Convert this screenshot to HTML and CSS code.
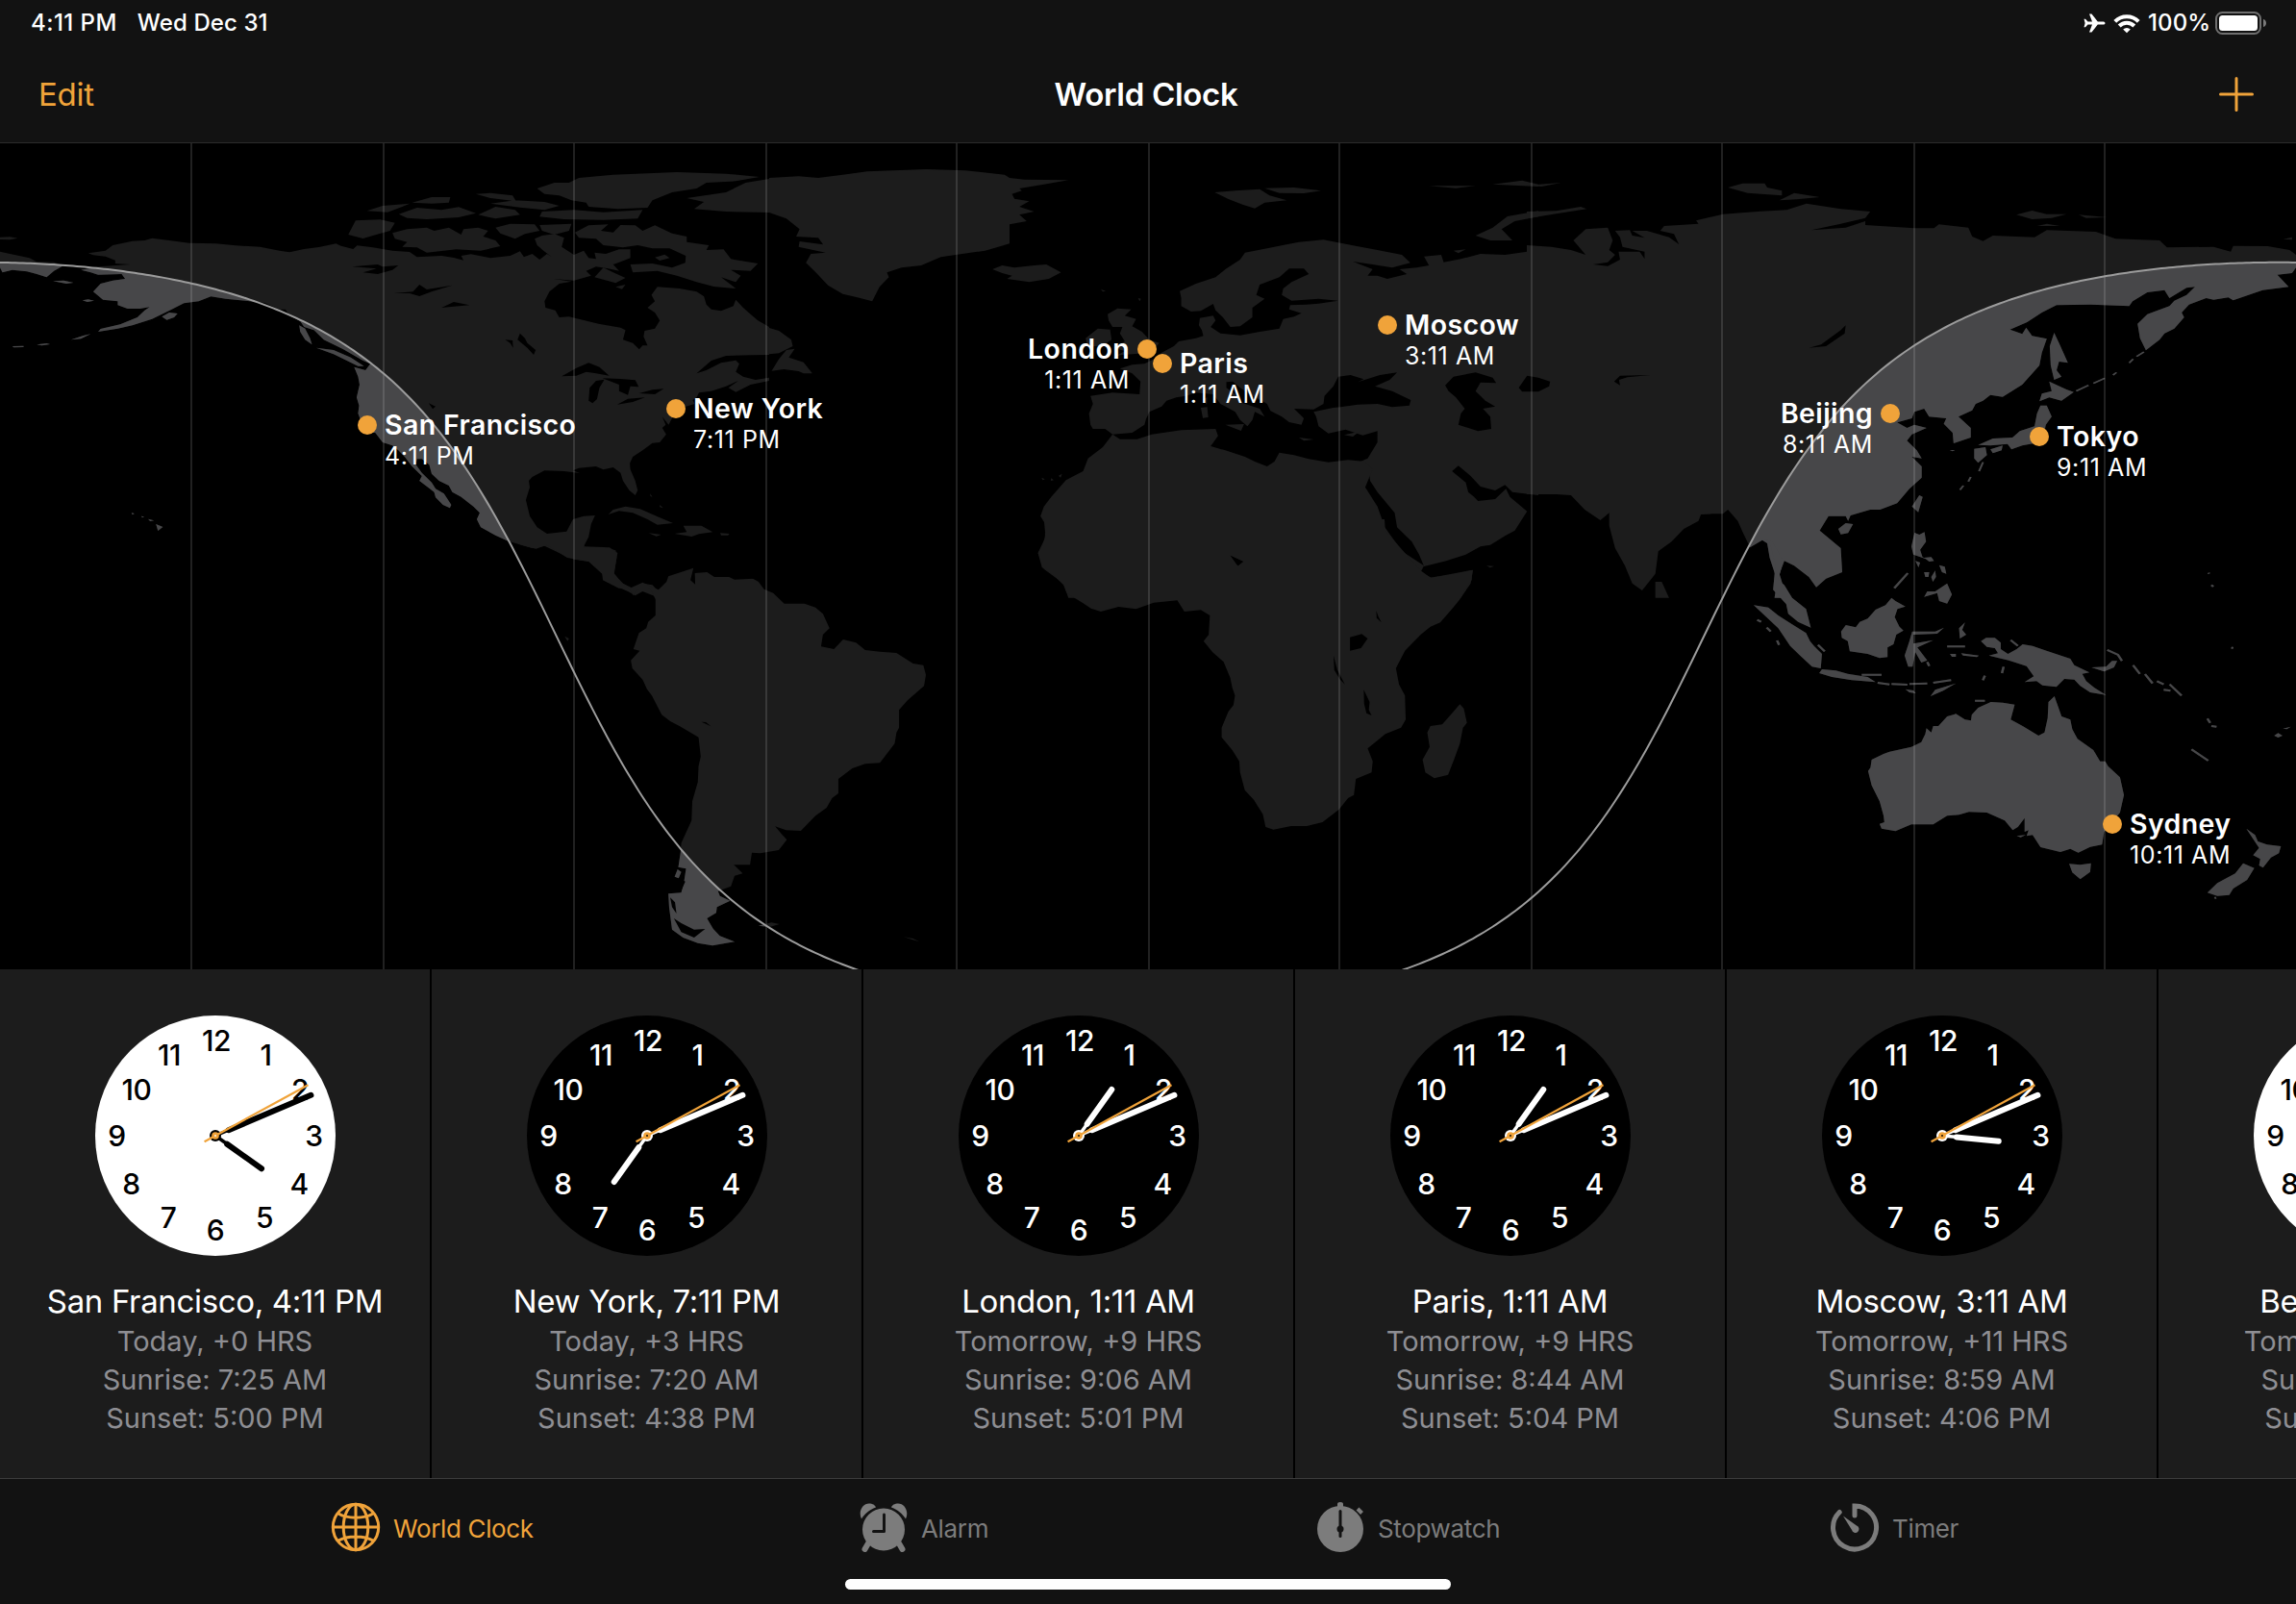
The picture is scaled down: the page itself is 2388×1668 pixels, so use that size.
FILE: index.html
```
<!DOCTYPE html>
<html lang="en">
<head>
<meta charset="utf-8">
<title>World Clock</title>
<link rel="stylesheet" href="styles.css">
</head>
<body>
<div class="screen">
  <header class="top">
    <div class="status">
      <div class="status-left"><span class="st-time">4:11 PM</span><span class="st-date">Wed Dec 31</span></div>
      <div class="status-right">
        <svg class="plane" width="23" height="20" viewBox="0 0 23 20"><path d="M22.500 10c0 1-1 1.600-2.500 1.600h-5.200L8.500 19.500H6l3-7.900H4.500L2 14.300H.5L1.600 10 .5 5.700H2l2.500 2.700H9L6 .5h2.500l6.300 7.900H20c1.500 0 2.500.6 2.500 1.600z"/></svg>
        <svg class="wifi" width="28" height="21" viewBox="0 0 28 21"><path class="arc" d="M1.800 8.300a17.300 17.300 0 0 1 24.400 0M6.200 13a11 11 0 0 1 15.600 0"/><path d="M14 20.300l-3.800-3.900a5.500 5.500 0 0 1 7.600 0z"/></svg>
        <span class="st-pct">100%</span>
        <svg class="batt" width="54" height="24" viewBox="0 0 54 24"><rect class="shell" x="1" y="1" width="46" height="22" rx="6.500"/><rect x="4" y="4" width="40" height="16" rx="3.500"/><path class="nub" d="M50 8c4 1 4 7 0 8z"/></svg>
      </div>
    </div>
    <div class="nav">
      <span class="edit">Edit</span>
      <h1 class="title">World Clock</h1>
      <svg class="plus" width="36" height="36" viewBox="0 0 36 36"><path d="M18 1.500v33M1.500 18h33"/></svg>
    </div>
  </header>

  <main class="map">
    <svg class="world" width="2388" height="860" viewBox="0 148 2388 860">
      <defs>
        <clipPath id="day"><path id="dayArea"/></clipPath>
        <g id="land">
          <!-- North America -->
          <g transform="translate(0 140) scale(.5102 .33333)">
            <path d="M0 365L30 375 60 385 75 397 110 398 130 408 110 425 95 445 75 435 55 427 25 422 5 430 0 415zM0 320L20 319 36 323 20 328 0 327zM108 457L130 455 150 462 135 465zM168 517L180 514 192 518 178 522z"/>
            <path d="M180 370L215 362 230 345 270 332 295 330 310 323 345 330 385 338 440 340 480 346 530 350 570 362 590 367 620 357 650 351 685 340 695 347 720 357 728 346 760 352 800 362 835 366 850 382 900 378 925 384 945 392 940 378 960 373 1000 385 1040 378 1060 364 1068 382 1085 372 1100 390 1115 372 1125 382 1108 362 1095 345 1090 325 1105 315 1130 310 1150 322 1145 350 1170 375 1190 362 1200 385 1215 388 1212 368 1235 372 1262 358 1285 358 1285 385 1260 400 1250 405 1262 425 1240 418 1215 412 1195 425 1205 440 1170 455 1128 450 1165 458 1140 465 1120 490 1110 520 1112 540 1132 548 1140 570 1160 568 1180 575 1220 590 1265 602 1275 610 1270 640 1290 650 1303 670 1310 658 1320 658 1312 630 1314 612 1335 605 1345 580 1335 555 1320 540 1335 520 1328 500 1340 475 1385 480 1420 490 1435 505 1440 530 1450 545 1470 550 1495 535 1500 515 1515 540 1530 560 1545 580 1568 600 1568 687 1530 688 1480 690 1450 705 1420 745 1440 735 1470 712 1500 704 1507 715 1500 740 1515 755 1540 765 1568 758 1568 768 1530 780 1500 803 1485 790 1505 768 1480 785 1450 800 1425 805 1420 820 1412 828 1416 840 1395 850 1375 868 1370 885 1363 905 1350 880 1357 905 1350 915 1358 935 1345 960 1330 962 1310 985 1290 1005 1284 1025 1285 1045 1295 1080 1300 1110 1295 1125 1283 1110 1270 1080 1265 1055 1250 1038 1230 1045 1215 1035 1180 1040 1168 1048 1182 1056 1150 1050 1110 1048 1085 1068 1078 1080 1080 1100 1072 1140 1080 1190 1095 1225 1115 1245 1155 1238 1168 1200 1190 1190 1213 1188 1205 1215 1200 1255 1190 1285 1230 1287 1255 1297 1257 1320 1252 1370 1270 1400 1290 1415 1310 1400 1330 1405 1345 1430 1335 1440 1310 1425 1295 1438 1280 1425 1250 1405 1230 1390 1228 1370 1200 1332 1170 1325 1140 1305 1110 1283 1085 1290 1036 1268 1010 1250 980 1225 972 1200 978 1180 965 1160 940 1130 922 1115 915 1095 895 1080 880 1058 875 1030 860 1012 850 1012 848 1030 860 1055 880 1085 888 1105 905 1120 920 1155 917 1165 903 1155 888 1132 885 1115 855 1080 860 1065 840 1035 825 1005 812 985 800 970 780 960 765 930 750 930 735 890 730 870 732 845 727 820 733 780 730 755 722 725 745 735 755 715 740 705 700 670 660 640 640 610 620 600 612 582 590 565 582 545 570 545 540 525 500 518 460 512 430 505 405 520 375 526 350 545 310 575 270 595 240 605 200 615 205 606 245 592 280 570 295 548 305 538 285 543 260 543 240 532 240 520 210 515 190 490 205 465 230 455 255 450 248 435 200 437 185 430 165 422 200 412 265 405 235 402 235 392 215 380 190 376z"/>
            <path d="M645 665L680 672 715 695 742 722 730 722 700 700 680 685zM610 595L622 605 632 635 636 655 622 640 612 615zM330 568L345 555 362 558 355 570 340 578zM145 640L170 627 185 622 165 637zM75 655L95 651 102 654 85 658zM25 660L48 659 48 663 28 664zM318 1215L332 1224 322 1236zM302 1199L314 1204 306 1206zM288 1190L294 1192 290 1195zM268 1180L274 1182 270 1186z"/>
            <path d="M725 268L775 265 805 275 795 300 760 315 740 324 710 312zM800 307L830 295 870 290 885 300 915 290 940 312 945 295 975 290 995 300 985 318 1010 330 1020 348 980 362 930 358 870 368 850 352 820 350 830 335 805 325zM748 238L780 222 835 215 820 225 790 242zM813 248L850 228 900 235 935 226 970 245 935 258 870 264 830 260zM840 212L880 195 918 195 915 212 880 215zM970 185L1000 182 1045 190 1052 208 1000 198zM1000 215L1050 205 1110 210 1140 222 1110 235 1060 227zM975 250L1010 225 1050 235 1060 250 1010 262zM1105 240L1170 235 1230 242 1310 235 1300 262 1230 266 1150 264 1100 256zM1095 168L1130 150 1160 150 1180 135 1250 125 1380 117 1480 122 1548 132 1500 145 1440 150 1420 168 1370 180 1330 205 1320 228 1260 232 1200 225 1195 212 1165 205 1140 190 1110 185zM1010 290L1040 278 1090 280 1100 300 1070 310 1050 325 1020 308zM1100 282L1165 278 1160 300 1130 312 1105 300z"/>
            <path d="M1172 305L1200 283 1240 280 1225 300 1250 305 1265 282 1295 283 1310 300 1335 283 1370 308 1400 318 1400 335 1445 345 1440 360 1475 358 1490 388 1545 402 1530 425 1490 422 1510 440 1500 460 1470 445 1500 480 1455 474 1420 460 1380 440 1340 425 1290 430 1285 405 1330 402 1370 415 1397 400 1398 378 1365 355 1330 355 1300 345 1270 352 1230 345 1215 325 1180 322zM1335 383L1355 374 1365 385 1345 393zM1212 445L1230 415 1250 430 1275 447 1255 463 1230 452zM1255 475L1275 468 1268 482zM1240 1185L1250 1170 1275 1160 1305 1168 1345 1195 1372 1212 1340 1217 1320 1200 1290 1180 1262 1174zM1375 1245L1400 1240 1393 1220 1430 1220 1453 1240 1425 1246 1410 1254zM1322 1243L1348 1248 1338 1253zM1468 1243L1487 1245 1484 1250 1470 1250zM1325 1120L1330 1130 1326 1128zM1345 1155L1352 1165 1345 1162z"/>
            <path d="M1568 138L1520 150 1480 180 1400 198 1435 210 1415 232 1480 240 1568 243z"/>
          </g>
          <!-- Greenland, Europe, northern Africa, Middle East -->
          <g transform="translate(800 140) scale(.5102 .33333)">
            <path d="M0 135L60 130 100 135 150 125 200 115 320 108 400 112 480 125 490 135 520 140 610 142 560 155 510 168 515 175 495 185 500 200 530 208 510 225 540 240 510 250 525 270 490 280 490 340 440 362 350 382 310 408 270 415 240 430 244 445 225 475 210 520 180 508 150 497 120 470 95 430 75 400 85 372 115 368 60 350 62 333 110 343 100 322 55 318 62 295 35 262 0 243z"/>
            <path d="M0 603L20 612 45 640 48 660 20 682 0 685zM5 737L20 700 35 672 52 668 40 695 70 710 88 745 70 745 60 738 30 732zM455 420L475 408 500 415 540 408 565 405 595 430 570 450 530 460 485 450 495 440 475 432zM908 180L950 175 1000 170 1020 190 1055 205 1010 212 990 230 965 218 935 200zM1010 167L1070 165 1125 175 1090 183 1040 182zM690 560L710 542 738 545 725 565 748 575 740 598 760 615 775 640 795 650 785 668 765 682 715 688 700 697 725 675 703 665 725 645 715 620 720 600 700 600 692 580zM650 662L645 635 670 605 695 608 698 640 680 658z"/>
            <path d="M655 905L652 870 660 840 655 815 700 805 755 810 757 770 740 745 715 730 740 718 765 715 785 700 800 680 825 660 835 645 870 635 885 628 882 610 876 595 878 572 905 565 910 580 900 600 920 620 960 626 1000 615 1040 605 1048 575 1070 568 1085 557 1060 545 1062 532 1095 530 1120 527 1160 518 1120 512 1065 518 1045 500 1048 480 1065 460 1100 435 1090 418 1060 418 1040 445 1000 468 993 500 1010 512 985 540 985 570 960 598 940 600 925 570 910 548 905 528 880 550 860 552 840 535 840 510 837 488 870 465 910 445 930 420 960 390 970 368 990 362 1030 350 1080 335 1130 328 1170 340 1240 360 1290 375 1307 400 1270 415 1230 405 1190 396 1230 420 1220 440 1240 440 1260 450 1300 435 1285 420 1320 415 1345 408 1335 380 1370 375 1375 398 1410 388 1450 372 1500 375 1555 363 1568 370 1568 1125 1515 1115 1500 1093 1480 1110 1450 1098 1430 1065 1405 1033 1392 1050 1420 1085 1425 1115 1437 1130 1445 1143 1480 1137 1502 1105 1510 1130 1545 1175 1520 1235 1500 1252 1470 1280 1450 1285 1420 1310 1380 1330 1335 1347 1325 1310 1310 1270 1280 1225 1275 1180 1240 1115 1225 1080 1223 1053 1217 1082 1190 1043 1205 1020 1220 1010 1240 960 1240 925 1210 938 1175 920 1140 932 1120 910 1115 880 1110 865 1150 852 1165 850 1200 842 1240 840 1270 850 1305 845 1308 828 1270 800 1235 785 1265 765 1280 742 1245 750 1200 772 1212 763 1185 750 1160 755 1150 785 1132 815 1130 840 1110 857 1070 855 1090 885 1085 905 1060 897 1045 880 1022 862 1015 840 980 810 960 790 945 770 932 772 932 790 950 810 960 835 1000 855 1010 880 990 865 985 890 975 910 960 890 950 865 920 840 905 810 870 805 850 815 830 820 810 830 800 848 775 865 768 888 765 905 740 930 700 935 685 918 660 918z"/>
            <path d="M930 905L968 903 962 924zM880 852L893 850 895 882 884 884zM884 825L893 820 892 842zM1080 945L1110 951 1090 955zM1172 937L1203 926 1190 942zM1440 315L1475 290 1505 255 1568 238 1568 256 1520 270 1493 295 1515 330 1470 330zM1345 160L1440 160 1400 167zM1475 155L1535 143 1568 155 1568 162zM1395 362L1420 358 1405 370zM555 1070L562 1075 558 1078zM575 1072L580 1078 574 1080zM590 1064L597 1058 594 1070zM676 482L686 488 680 490zM752 510L758 512 755 520z"/>
            <path d="M700 935L715 950 750 950 780 935 840 922 910 918 915 940 900 972 930 985 970 1005 990 1020 1015 1035 1030 1020 1040 992 1070 1000 1100 1012 1140 1022 1180 1015 1215 1020 1230 1045 1215 1100 1240 1160 1255 1225 1290 1300 1320 1330 1335 1345 1328 1365 1350 1382 1400 1370 1435 1358 1430 1400 1410 1445 610 1445 600 1400 560 1355 548 1305 562 1260 563 1215 553 1190 560 1160 575 1130 605 1078 640 1050 650 1010 680 975z"/>
          </g>
          <!-- Asia -->
          <g transform="translate(1588 140) scale(.5102 .33333)">
            <path d="M0 345L50 350 90 360 120 375 95 330 120 295 165 290 175 330 168 360 180 375 165 398 135 405 165 410 190 390 187 365 230 365 240 387 240 365 195 350 190 320 180 300 210 298 215 315 240 322 215 300 245 300 290 320 310 342 300 310 272 300 280 285 350 278 345 268 400 248 470 240 530 235 570 215 640 232 700 240 690 260 640 278 580 298 650 290 690 270 690 282 720 285 790 292 830 292 840 280 900 290 908 318 930 332 950 315 1035 320 1060 298 1160 303 1200 325 1290 330 1305 352 1400 350 1435 365 1440 347 1510 348 1555 360 1568 375 1568 415 1560 432 1530 437 1553 475 1500 485 1440 517 1430 508 1400 515 1385 510 1350 530 1335 555 1340 570 1320 605 1300 620 1290 640 1262 673 1250 635 1245 590 1265 560 1310 535 1320 518 1345 500 1362 475 1345 478 1310 510 1300 485 1265 492 1235 520 1228 535 1150 530 1080 532 1050 555 1020 585 985 608 1010 622 1018 602 1030 628 1060 637 1050 680 1045 720 1010 780 970 818 945 812 930 830 915 840 908 860 880 880 905 915 905 945 870 963 868 930 850 902 855 885 820 880 810 855 790 865 785 885 755 898 775 915 790 905 815 915 785 935 775 955 795 985 805 1010 785 1005 805 1035 805 1070 780 1105 755 1150 720 1170 700 1170 660 1188 655 1205 650 1190 615 1190 597 1235 640 1290 643 1365 610 1385 590 1412 575 1380 545 1345 525 1330 515 1370 530 1445 505 1445 510 1390 495 1320 490 1275 480 1265 455 1288 440 1240 430 1205 410 1170 400 1183 380 1183 355 1185 350 1205 320 1230 295 1270 268 1300 262 1370 235 1422 215 1400 200 1345 180 1290 168 1220 168 1180 150 1203 118 1170 90 1125 60 1122 0 1122z"/>
            <path d="M262 1395L275 1395 290 1445 262 1445zM1075 618L1085 650 1103 712 1085 708 1080 735 1090 755 1075 765 1068 720 1066 660zM1045 832L1050 808 1070 800 1065 770 1100 795 1115 803 1090 830 1065 820zM1047 845L1060 845 1070 880 1058 905 1052 950 1045 960 1010 970 988 982 980 965 945 970 920 968 950 948 990 945 1005 925 1035 910 1040 870zM912 980L935 975 938 1000 920 1024 912 1010zM945 982L970 970 968 985 950 994zM785 1160L800 1125 807 1130 798 1178zM635 1230L650 1212 665 1215 655 1243 640 1247zM410 165L440 152 485 152 490 165 520 175 520 190 450 182zM515 205L545 182 597 195 550 202zM998 250L1030 237 1060 248 1100 248 1070 260 1030 264zM1125 250L1183 258 1140 260zM1040 285L1060 278 1087 285zM0 240L60 238 110 225 122 232 60 247 0 262zM0 158L70 150 30 162zM1542 326L1560 320 1560 328zM862 984L873 984 868 988z"/>
            <path class="chain" d="M1120 800L1145 782M1155 776L1178 760M1195 750L1202 742M1228 712L1236 700M1243 692L1258 678M930 1022L922 1050M905 1068L900 1082M890 1095L883 1108"/>
          </g>
          <!-- South America -->
          <g transform="translate(500 560) scale(.38265 .33333)">
            <path d="M70 0L110 20 150 32 180 20 200 35 235 60 295 72 330 110 332 130 375 155 402 155 415 178 425 160 460 155 475 190 475 240 455 260 450 280 430 295 415 345 432 350 408 380 412 405 440 440 452 470 465 490 492 550 515 570 540 585 592 620 598 680 592 710 590 760 575 820 573 880 545 950 543 980 537 1025 558 1030 552 1075 545 1105 510 1108 512 1150 520 1220 550 1245 590 1262 630 1270 690 1258 650 1240 632 1218 615 1185 640 1168 642 1150 678 1130 650 1115 645 1100 680 1085 690 1052 712 1045 688 1018 715 1018 732 1018 737 980 760 982 810 972 832 940 820 925 800 898 830 910 870 912 910 865 940 840 955 810 972 795 972 750 1010 717 1045 703 1085 700 1125 640 1130 605 1137 590 1137 535 1160 505 1205 460 1210 425 1203 395 1175 390 1130 357 1085 353 1045 348 1020 325 985 315 960 345 925 337 930 300 948 280 930 235 910 215 880 203 825 203 795 170 770 158 755 135 740 125 690 128 675 120 635 120 615 105 582 108 583 143 570 130 578 92 510 118 505 135 483 160 440 137 405 155 380 135 362 108 372 45 350 28 280 28 285 0zM755 1208L790 1198 812 1203 785 1212zM1150 1243L1175 1248 1192 1258 1170 1250zM527 1055L535 1032 545 1040 538 1060zM228 305L240 312 236 320z"/>
          </g>
          <!-- Southern Africa and Madagascar -->
          <g transform="translate(1000 540) scale(.40816 .33333)">
            <path d="M210 0L214 50 207 80 195 105 205 150 235 175 260 205 268 230 310 262 330 278 355 288 400 273 445 280 490 260 550 253 568 288 610 283 633 300 630 360 617 380 640 415 668 445 685 495 690 525 697 550 693 580 680 600 663 650 663 680 690 720 708 755 710 790 722 845 745 875 768 920 775 960 795 968 840 957 880 957 920 945 962 905 985 870 1000 860 1005 810 1045 790 1048 755 1035 715 1060 690 1080 670 1120 650 1132 625 1130 550 1115 515 1107 465 1130 410 1170 360 1195 335 1220 322 1250 280 1270 250 1285 215 1300 190 1302 158 1230 175 1195 182 1170 160 1130 105 1080 35 1078 0zM1270 577L1280 590 1288 635 1278 650 1270 700 1255 750 1240 797 1205 808 1182 790 1175 750 1193 710 1187 665 1195 645 1225 640 1250 605zM1338 145L1357 146 1347 151z"/>
          </g>
          <!-- Southeast Asia, Australia, New Zealand -->
          <g transform="translate(1740 500) scale(.41327 .33333)">
            <path d="M225 180L243 190 258 260 252 340 285 385 290 415 315 440 347 458 335 400 300 365 280 325 265 310 277 250 250 190zM203 388L240 395 265 420 300 448 335 475 345 500 355 515 375 540 372 585 350 580 320 545 295 515 265 460zM368 600L375 588 410 592 440 602 490 612 510 628 450 622 400 612zM648 672L660 652 712 632 680 655zM585 650L605 654 611 663 595 660zM423 470L435 450 460 457 470 440 490 430 510 402 535 388 550 365 560 375 585 392 565 400 558 425 570 455 580 467 562 480 555 510 540 520 540 550 520 553 490 540 445 532 440 500 425 490zM583 545L595 500 602 470 660 470 682 458 665 477 605 480 605 508 655 497 615 520 640 560 625 567 610 535 603 580 592 580zM722 492L720 460 735 442 728 465 738 480zM725 538L770 545 765 550 730 545zM697 540L712 540 712 549 702 549zM775 500L788 490 810 490 825 505 825 525 843 540 865 525 880 510 905 515 940 530 1000 555 1010 575 1048 598 1030 602 1040 625 1060 645 1090 668 1050 660 1025 640 1010 620 985 618 965 643 930 638 915 625 885 628 908 610 890 578 845 560 820 553 795 545 818 538 810 522 790 518zM1053 582L1090 580 1105 562 1118 562 1110 582 1085 595zM608 162L620 168 633 160 637 190 622 215 628 238 640 245 605 230 600 205zM632 362L640 345 660 345 690 320 702 355 690 383 670 375 665 350zM632 240L650 238 657 250 645 252zM670 263L684 268 688 290 677 285zM632 285L645 285 643 300 635 300zM610 250L622 255 618 270zM660 280L662 300 654 315 650 300z"/>
            <path d="M500 870L530 852 545 845 600 830 625 815 635 790 638 772 650 785 655 765 668 765 690 735 712 727 735 745 750 748 752 730 768 708 800 690 830 692 860 698 850 745 880 765 920 795 935 785 943 740 945 690 960 672 968 700 978 735 1000 745 1005 775 1018 805 1058 840 1075 875 1088 875 1095 890 1125 925 1135 980 1125 1035 1105 1065 1085 1095 1080 1135 1050 1142 1020 1160 1000 1148 975 1158 925 1143 905 1105 890 1108 895 1090 885 1095 885 1052 868 1080 855 1090 835 1060 790 1035 745 1033 720 1042 690 1045 655 1072 600 1072 560 1093 525 1085 520 1070 532 1065 530 1045 520 1000 500 950 491 905 497 895zM865 1108L888 1105 875 1112zM997 1195L1025 1198 1052 1193 1050 1220 1025 1243 1005 1222zM1443 1085L1465 1105 1472 1125 1495 1135 1530 1140 1525 1162 1505 1175 1485 1207 1475 1200 1478 1180 1460 1168 1475 1145zM1435 1193L1463 1208 1445 1245 1410 1272 1400 1292 1370 1295 1345 1285 1370 1255 1415 1225zM1513 795L1523 787 1534 795 1523 801zM1535 773L1555 767 1545 775z"/>
            <path class="chain thick" d="M515 630L545 635M550 634L590 636M595 634L640 632M655 630L700 622M557 335L575 310 591 288M212 434L222 440M236 458L246 470M262 498L267 512M365 512L382 532M640 565L645 578M832 580L828 600M785 608L780 622M1093 528L1120 543 1130 562M1158 575L1175 602M1188 603L1207 632M1218 625L1235 635M1235 652L1252 655M1250 635L1280 670M1305 838L1347 873M1345 742L1352 755M1355 765L1368 767M760 686L785 686M1348 287L1349 290M1355 325L1360 330M1363 1302L1367 1300M1405 520L1410 522M850 497L868 515M690 517L735 517M475 605L525 605"/>
          </g>
        </g>
        <g id="lakes">
          <path transform="translate(0 140) scale(.5102 .33333)" d="M718 412L770 405 780 412 812 408 800 422 770 435 740 430 768 418zM803 495L842 490 855 468 870 483 922 470 880 490 855 504 835 495zM900 540L925 522 957 532 925 536zM1060 620L1070 635 1075 650 1092 672 1088 687 1075 665 1055 640zM1030 640L1045 642 1046 665 1040 650zM1145 754L1175 728 1200 712 1222 725 1242 752 1215 745 1195 740 1175 752zM1200 830L1202 790 1215 768 1232 764 1222 790 1217 825 1208 838zM1228 760L1265 762 1295 766 1302 787 1285 785 1280 812 1262 800 1262 780zM1258 842L1280 824 1315 820 1290 834zM1303 807L1330 796 1353 793 1335 810zM874 838L888 848 882 856z"/>
          <path transform="translate(800 140) scale(.5102 .33333)" d="M1378 782L1395 755 1440 742 1475 758 1482 775 1450 773 1440 800 1460 830 1480 848 1455 855 1470 880 1472 918 1445 925 1405 905 1410 870 1418 855 1400 820 1385 800zM1528 790L1545 752 1568 758 1592 770 1590 785 1568 802 1535 802zM940 1313L966 1332 955 1345z"/>
          <path transform="translate(1588 140) scale(.5102 .33333)" d="M575 665L600 655 640 610 650 595 648 620 610 660zM178 770L190 752 252 750 205 757 188 765 190 782z"/>
          <path transform="translate(1000 540) scale(.40816 .33333)" d="M990 368L1020 358 1035 372 1018 402 990 410zM948 425L958 470 977 515 965 500 950 470zM1025 532L1040 570 1038 595 1045 612 1032 605 1026 575zM1057 286L1063 305 1070 322 1058 308zM687 115L718 132 705 145z"/>
          <path transform="translate(500 560) scale(.38265 .33333)" d="M600 572L612 573 626 586zM700 116L755 120 750 127zM540 1060L556 1070 545 1098zM515 1120L528 1135 532 1170 520 1150zM525 1185L545 1200 580 1220 610 1218 580 1245 545 1228z"/>
        </g>
      </defs>
      <use class="night" href="#land"/>
      <use class="daylight" href="#land" clip-path="url(#day)"/>
      <use href="#lakes"/>
      <path class="meridians" d="M199 148v860M399 148v860M597 148v860M797 148v860M995 148v860M1195 148v860M1393 148v860M1593 148v860M1791 148v860M1991 148v860M2189 148v860"/>
      <path class="terminator" id="terminator"/>
    </svg>

    <div class="pin sf"><i></i><p><b>San Francisco</b><span>4:11 PM</span></p></div>
    <div class="pin ny"><i></i><p><b>New York</b><span>7:11 PM</span></p></div>
    <div class="pin left london"><i></i><p><b>London</b><span>1:11 AM</span></p></div>
    <div class="pin paris"><i></i><p><b>Paris</b><span>1:11 AM</span></p></div>
    <div class="pin moscow"><i></i><p><b>Moscow</b><span>3:11 AM</span></p></div>
    <div class="pin left beijing"><i></i><p><b>Beijing</b><span>8:11 AM</span></p></div>
    <div class="pin tokyo"><i></i><p><b>Tokyo</b><span>9:11 AM</span></p></div>
    <div class="pin sydney"><i></i><p><b>Sydney</b><span>10:11 AM</span></p></div>
  </main>

  <section class="clocks">
    <article class="card"><svg class="dial light" data-hour="4"></svg><h2>San Francisco, 4:11 PM</h2><p>Today, +0 HRS</p><p>Sunrise: 7:25 AM</p><p>Sunset: 5:00 PM</p></article>
    <article class="card"><svg class="dial" data-hour="7"></svg><h2>New York, 7:11 PM</h2><p>Today, +3 HRS</p><p>Sunrise: 7:20 AM</p><p>Sunset: 4:38 PM</p></article>
    <article class="card"><svg class="dial" data-hour="1"></svg><h2>London, 1:11 AM</h2><p>Tomorrow, +9 HRS</p><p>Sunrise: 9:06 AM</p><p>Sunset: 5:01 PM</p></article>
    <article class="card"><svg class="dial" data-hour="1"></svg><h2>Paris, 1:11 AM</h2><p>Tomorrow, +9 HRS</p><p>Sunrise: 8:44 AM</p><p>Sunset: 5:04 PM</p></article>
    <article class="card"><svg class="dial" data-hour="3"></svg><h2>Moscow, 3:11 AM</h2><p>Tomorrow, +11 HRS</p><p>Sunrise: 8:59 AM</p><p>Sunset: 4:06 PM</p></article>
    <article class="card"><svg class="dial light" data-hour="8"></svg><h2>Beijing, 8:11 AM</h2><p>Tomorrow, +16 HRS</p><p>Sunrise: 7:36 AM</p><p>Sunset: 4:58 PM</p></article>
  </section>

  <footer class="bottom">
    <nav class="tabs">
      <a class="tab active world-tab">
        <svg width="52" height="52" viewBox="0 0 52 52"><g class="line"><circle cx="26" cy="26" r="23.700"/><ellipse cx="26" cy="26" rx="12.800" ry="23.700"/><path d="M26 2v48M2 26h48M8 12c9 5.500 27 5.500 36 0M8 40c9-5.500 27-5.500 36 0"/></g></svg>
        <span>World Clock</span>
      </a>
      <a class="tab alarm-tab">
        <svg width="52" height="52" viewBox="0 0 52 52"><circle cx="26" cy="28.500" r="22"/><path d="M3 17.500C-1 9 5 .5 12 1.500c4 .5 5.500 2.500 6 4C11 8 6.500 12 3 17.500zM49 17.500C53 9 47 .5 40 1.500c-4 .5-5.500 2.500-6 4C41 8 45.500 12 49 17.500z"/><path class="legs" d="M10 43l-3.500 6M42 43l3.500 6"/><path class="cut" d="M26.500 13v17.500H15.500"/></svg>
        <span>Alarm</span>
      </a>
      <a class="tab stop-tab">
        <svg width="52" height="52" viewBox="0 0 52 52"><circle cx="26" cy="28" r="24"/><path d="M23 5V2q0-2 3-2t3 2v3z"/><path class="button" d="M44 7l4.500 4.500"/><path class="cut thin" d="M26 9.500v26"/><circle class="cutfill" cx="26" cy="28" r="3.500"/></svg>
        <span>Stopwatch</span>
      </a>
      <a class="tab timer-tab">
        <svg width="52" height="52" viewBox="0 0 52 52"><path class="ring" d="M26 14V4A22.500 22.500 0 1 1 10.200 10.500"/><path d="M14 14.500L28 24.500a3.800 3.800 0 1 1-5 4.500z"/></svg>
        <span>Timer</span>
      </a>
    </nav>
    <div class="home"></div>
  </footer>
</div>
<script src="script.js"></script>
</body>
</html>
```
FILE: styles.css
```
* { box-sizing: border-box; margin: 0; padding: 0; }
body { background: #000; color: #fff; font-family: Inter, "Liberation Sans", sans-serif; overflow: hidden; }
.screen { width: 2388px; height: 1668px; display: flex; flex-direction: column; overflow: hidden; }

.top { height: 149px; background: #121212; border-bottom: 1px solid #2b2b2b; flex: none; }
.status { height: 48px; display: flex; justify-content: space-between; padding: 0 30px 0 32px; font-size: 24px; font-weight: 500; line-height: 48px; }
.status-left { display: flex; gap: 21px; }
.st-time { letter-spacing: .45px; }
.st-date { letter-spacing: .1px; }
.status-right { display: flex; align-items: center; }
.status-right svg { fill: #fff; flex: none; }
.wifi { margin: 0 8px; }
.wifi .arc { fill: none; stroke: #fff; stroke-width: 4; }
.st-pct { width: 64px; margin-right: 6px; white-space: nowrap; letter-spacing: .1px; }
.batt .shell { fill: none; stroke: #6f6f6f; stroke-width: 2; }
.batt .nub { fill: #7a7a7a; }
.nav { height: 100px; display: grid; grid-template-columns: 1fr auto 1fr; align-items: center; padding: 0 44px 0 40px; }
.edit { color: #f0a33a; font-size: 33px; letter-spacing: -.3px; }
.title { font-size: 33px; font-weight: 600; letter-spacing: -.3px; }
.plus { justify-self: end; fill: none; stroke: #f0a33a; stroke-width: 3; stroke-linecap: round; }

.map { position: relative; height: 859px; flex: none; background: #000; overflow: hidden; }
.world { display: block; margin-top: -1px; }
.night { fill: #1c1c1c; stroke: #1c1c1c; }
.daylight { fill: #474749; stroke: #474749; }
#land path { stroke: none; }
#land .chain { fill: none; stroke: inherit; stroke-width: 4; }
#land .thick { stroke-width: 6; }
#lakes { fill: #000; }
.meridians { fill: none; stroke: #fff; stroke-opacity: .13; stroke-width: 2; }
.terminator { fill: none; stroke: #9c9c9c; stroke-width: 2; }

.pin { position: absolute; display: flex; gap: 8px; align-items: flex-start; white-space: nowrap; }
.pin i { width: 20px; height: 20px; border-radius: 50%; background: #f0a33a; flex: none; }
.pin p { margin-top: -8px; }
.pin b { display: block; font-size: 28.500px; font-weight: 600; line-height: 36px; letter-spacing: .4px; }
.pin span { display: block; font-size: 25px; line-height: 28px; letter-spacing: .6px; }
.pin.left { flex-direction: row-reverse; text-align: right; }
.sf { left: 372px; top: 283px; }
.ny { left: 693px; top: 266px; }
.london { right: 1185px; top: 204px; }
.paris { left: 1199px; top: 219px; }
.moscow { left: 1433px; top: 179px; }
.beijing { right: 412px; top: 271px; }
.tokyo { left: 2111px; top: 295px; }
.sydney { left: 2187px; top: 698px; }

.clocks { height: 529px; flex: none; display: flex; gap: 2px; overflow: hidden; background: #000; }
.card { width: 447px; flex: none; background: #1c1c1c; display: flex; flex-direction: column; align-items: center; padding-top: 48px; white-space: nowrap; }
.dial { width: 250px; height: 250px; margin-bottom: 26px; color: #fff; --face: #000; }
.dial.light { color: #000; --face: #fff; }
.face { fill: var(--face); }
.dial text { fill: currentColor; font-size: 30px; font-weight: 450; text-anchor: middle; letter-spacing: -.5px; }
.hand { stroke: currentColor; stroke-width: 6; stroke-linecap: round; }
.stem { stroke: currentColor; stroke-width: 3.5; }
.hub { fill: currentColor; }
.second { stroke: #f0a33a; stroke-width: 2.200; }
.hub2 { fill: #f0a33a; }
.hub3 { fill: var(--face); }
.card h2 { font-size: 33px; font-weight: 400; line-height: 42px; letter-spacing: -.35px; margin-bottom: 1px; }
.card p { font-size: 29px; line-height: 40px; color: #8e8e93; letter-spacing: 0; }

.bottom { flex: 1; background: #121212; border-top: 1px solid #3c3c3c; display: flex; flex-direction: column; align-items: center; }
.tabs { height: 104px; width: 2388px; display: flex; padding: 24px 0 0 344px; color: #7c7c7c; }
.tab { display: flex; gap: 13px; height: 52px; font-size: 26px; white-space: nowrap; }
.tab span { line-height: 32px; padding-top: 12px; letter-spacing: -.35px; }
.tab svg { fill: currentColor; flex: none; }
.active { color: #f0a33a; }
.world-tab { width: 549px; }
.alarm-tab { width: 475px; }
.stop-tab { width: 535px; }
.line { fill: none; stroke: currentColor; stroke-width: 3; }
.legs { stroke: currentColor; stroke-width: 6; stroke-linecap: round; }
.button { stroke: currentColor; stroke-width: 4; }
.cut { fill: none; stroke: #121212; stroke-width: 3; stroke-linecap: round; stroke-linejoin: round; }
.cutfill { fill: #121212; }
.ring { fill: none; stroke: currentColor; stroke-width: 5; stroke-linecap: round; }
.home { width: 630px; height: 11px; border-radius: 6px; background: #fff; }
```
FILE: script.js
```
// Day/night boundary on an equirectangular map
const rad = Math.PI / 180;
const points = [];
for (let x = -4; x <= 2392; x += 4) {
  const lat = Math.atan(2.365 * Math.cos((x + 18.5) / 6.6333 * rad)) / rad;
  points.push(x + ' ' + (661 - 5.787 * lat).toFixed(2));
}
const curve = 'M' + points.join('L');
document.getElementById('terminator').setAttribute('d', curve);
document.getElementById('dayArea').setAttribute('d', curve + 'V1010H-4Z');

// Clock faces
const numerals = [[52.5, -84], [88, -48], [102.5, 0], [87, 50], [51, 85], [0, 98], [-49, 85], [-87.5, 50], [-102.5, 0], [-82, -48], [-48, -84], [1, -98.5]];
document.querySelectorAll('.dial').forEach(dial => {
  const hour = dial.dataset.hour * 30 + 5.5;
  dial.setAttribute('viewBox', '-125 -125 250 250');
  dial.innerHTML = '<circle class="face" r="125"/>' +
    numerals.map(([x, y], i) => `<text x="${x}" y="${y + 10.5}">${i + 1}</text>`).join('') +
    `<g transform="rotate(${hour})"><path class="stem" d="M0 0V-16"/><path class="hand" d="M0-15V-59"/></g>` +
    '<g transform="rotate(67)"><path class="stem" d="M0 0V-16"/><path class="hand" d="M0-15V-108"/></g>' +
    '<circle class="hub" r="6"/><path class="second" transform="rotate(61.300)" d="M0 13V-110"/>' +
    '<circle class="hub2" r="3.800"/><circle class="hub3" r=".9"/>';
});
```
